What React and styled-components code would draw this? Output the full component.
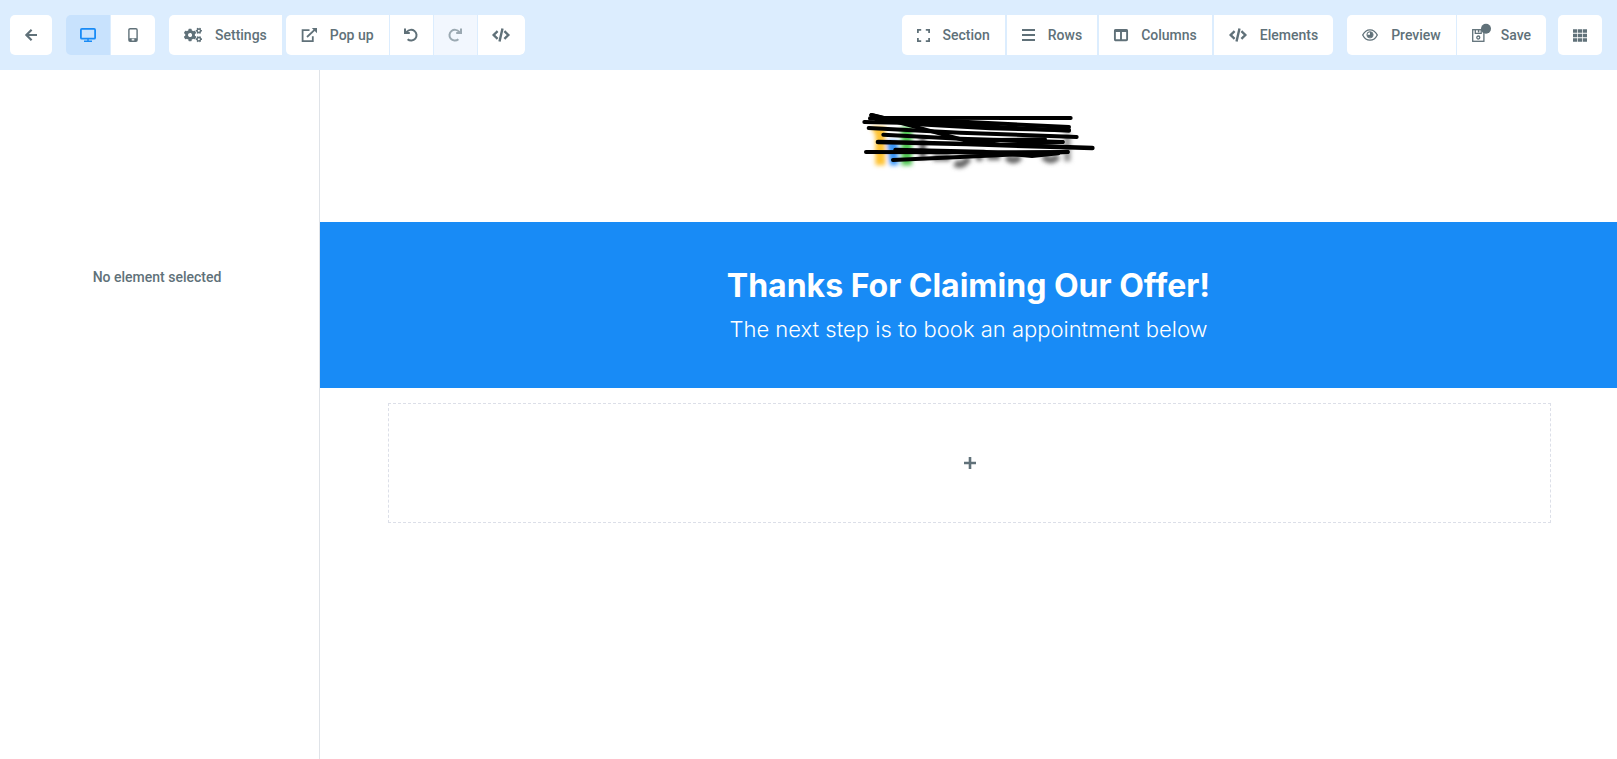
import React from "react";
import styled, { createGlobalStyle, css } from "styled-components";
import { FaCogs } from "react-icons/fa";

const GlobalStyle = createGlobalStyle`
  *, *::before, *::after { box-sizing: border-box; }
  html, body, #root { height: 100%; }
  body { margin: 0; background: #fff; color: #607179; font-family: Roboto, "Liberation Sans", sans-serif; }
`;

const Page = styled.div`
  display: flex;
  flex-direction: column;
  min-height: 100%;
`;

const Toolbar = styled.header`
  display: flex;
  justify-content: space-between;
  padding: 15px 15px 15px 10px;
  background: #dcedfe;
`;

const ToolbarSide = styled.div`
  display: flex;
  gap: ${(p) => p.$gap}px;
`;

const Group = styled.div`
  display: flex;
  gap: ${(p) => p.$gap || 1}px;
  border-radius: 5px;
  overflow: hidden;
`;

const ToolButton = styled.button`
  display: flex;
  align-items: center;
  justify-content: center;
  gap: 13px;
  height: 40px;
  min-width: ${(p) => p.$min || 44}px;
  padding: 0 ${(p) => (p.$iconOnly ? 0 : 15)}px;
  border: 0;
  background: #fff;
  color: #607179;
  font: 500 14px/20px Roboto, "Liberation Sans", sans-serif;
  white-space: nowrap;
  cursor: pointer;

  ${(p) =>
    p.$active &&
    css`
      background: #c8e2fd;
      color: #188bf6;
    `}

  &:disabled {
    background: #f2f7fe;
    color: #9ba9b2;
    cursor: default;
  }

  svg { flex: none; overflow: visible; }
`;

const Workspace = styled.div`
  display: flex;
  flex: 1;
`;

const Sidebar = styled.aside`
  flex: none;
  width: 320px;
  padding: 197px 5px 0 0;
  border-right: 1px solid #dfe3e8;
  font-size: 14px;
  font-weight: 500;
  line-height: 20px;
  text-align: center;
`;

const EmptyNote = styled.p`
  margin: 0;
`;

const Canvas = styled.main`
  flex: 1;
  min-width: 0;
`;

const LogoSection = styled.section`
  display: flex;
  justify-content: center;
  padding: 30px 0 42px;
`;

const Hero = styled.section`
  padding: 40px 16px;
  background: #188bf6;
  color: #fff;
  text-align: center;
`;

const HeroTitle = styled.h1`
  margin: 0;
  font: 700 32px/48px Inter, "Open Sans", sans-serif;
`;

const HeroText = styled.p`
  margin: 0;
  font: 300 22px/38px Inter, "Open Sans", sans-serif;
`;

const DropArea = styled.section`
  padding: 15px 66px 15px 68px;
`;

const AddButton = styled.button`
  display: flex;
  align-items: center;
  justify-content: center;
  width: 100%;
  height: 120px;
  border: 1px dashed #dcdfe8;
  background: transparent;
  color: #607179;
  cursor: pointer;
`;

function Icon({ w = 16, h = 16, stroke = 2, children }) {
  return (
    <svg width={w} height={h} viewBox={`0 0 ${w} ${h}`} fill="none" stroke="currentColor" strokeWidth={stroke} aria-hidden="true">
      {children}
    </svg>
  );
}

const BackIcon = () => (
  <Icon w={12} h={12} stroke={2.2}>
    <path d="M12 6H1.5M6.6.8L1.4 6l5.2 5.2" />
  </Icon>
);

const DesktopIcon = () => (
  <Icon w={16} h={14} stroke={1.8}>
    <rect x=".9" y=".9" width="14.2" height="9.8" rx="1" />
    <path d="M8 10.7v2.4M4 13.3h8" strokeWidth="1.5" />
  </Icon>
);

const PhoneIcon = () => (
  <Icon w={10} h={14} stroke={1.4}>
    <rect x=".9" y=".7" width="8.2" height="12.6" rx="1.2" />
    <path d="M1 11.8h2.7M6.3 11.8H9" strokeWidth="2.6" />
    <path d="M1.4 10.7h7.2" strokeWidth=".8" />
  </Icon>
);

const PopupIcon = () => (
  <Icon w={16} h={14} stroke={1.8}>
    <path d="M8.5 2.2H1.6v10.9h10.2V8.3" />
    <path d="M6 9l7.6-7.2" />
    <path d="M10.8 0H16v5.2z" fill="currentColor" stroke="none" />
  </Icon>
);

const UndoIcon = () => (
  <Icon w={14} h={14}>
    <path d="M2.800 4A5.400 5.400 0 1 1 3.600 11.300" />
    <path d="M1 .6v4.400h4.800" />
    <path d="M1 1.500L4.800 5.200H1z" fill="currentColor" stroke="none" />
  </Icon>
);

const RedoIcon = () => (
  <Icon w={14} h={14}>
    <path d="M11.200 4A5.400 5.400 0 1 0 10.400 11.300" />
    <path d="M13 .6v4.400H8.200" />
    <path d="M13 1.500L9.200 5.200H13z" fill="currentColor" stroke="none" />
  </Icon>
);

const CodeIcon = () => (
  <Icon w={18} h={14} stroke={2.4}>
    <path d="M5.600 3.200L1.700 7l3.900 3.800M12.400 3.200L16.300 7l-3.900 3.800M10.500.4L7.500 13.600" />
  </Icon>
);

const SectionIcon = () => (
  <Icon w={13} h={13} stroke={1.8}>
    <path d="M.9 4V.9H4.200M8.800.9h3.300V4M12.100 9v3.100H8.800M4.200 12.100H.9V9" />
  </Icon>
);

const RowsIcon = () => (
  <Icon w={13} h={12} stroke={2}>
    <path d="M0 1h13M0 6h13M0 11h13" />
  </Icon>
);

const ColumnsIcon = () => (
  <Icon w={14} h={12} stroke={1.900}>
    <rect x=".9" y=".9" width="12.200" height="10.400" rx=".8" />
    <path d="M7 2v9" />
    <path d="M.6 1.800h12.800" strokeWidth="2.600" />
  </Icon>
);

const EyeIcon = () => (
  <Icon w={16} h={12} stroke={1.300}>
    <path d="M.7 6C2.400 2.600 5 .8 8 .8S13.600 2.600 15.300 6C13.600 9.400 11 11.200 8 11.200S2.400 9.400.7 6z" />
    <circle cx="8" cy="5.800" r="3" fill="currentColor" stroke="none" />
    <path d="M5.400 5.800A2.600 2.600 0 0 1 8 3.200v2.600z" fill="#fff" stroke="none" />
    <circle cx="8" cy="5.800" r="3.200" strokeWidth=".8" />
  </Icon>
);

const SaveIcon = () => (
  <Icon w={16} h={13} stroke={1.300}>
    <rect x=".7" y=".7" width="11.200" height="11.600" />
    <path d="M3.300 1v3.400h5.900V1" />
    <path d="M6.600 1v2.400" strokeWidth="1.500" />
    <circle cx="6.300" cy="8.500" r="1.500" />
    <circle cx="14" cy="-.3" r="5" fill="currentColor" stroke="none" />
  </Icon>
);

const GridIcon = () => (
  <Icon w={14} h={13} stroke={3.600}>
    <path d="M0 2h14M0 6.500h14M0 11h14" strokeDasharray="4.200 .7" />
  </Icon>
);

const PlusIcon = () => (
  <Icon w={12} h={12} stroke={2.600}>
    <path d="M0 6h12M6 0v12" />
  </Icon>
);

function Logo() {
  return (
    <svg width="259" height="80" viewBox="-33 0 777 240" role="img" aria-label="Logo, crossed out">
      <defs>
        <filter id="smudge" x="-30%" y="-30%" width="160%" height="160%">
          <feGaussianBlur stdDeviation="7" />
        </filter>
      </defs>
      <g filter="url(#smudge)">
        <path d="M62 80h44v116H76v-90z" fill="#ffc233" />
        <path d="M110 122h34v74h-24z" fill="#3794f6" />
        <path d="M154 80h32v116h-32z" fill="#4fc653" />
        <g fill="none" stroke="#666" strokeWidth="20">
          <path d="M218 110v66M250 172h50M314 190q24 12 42-16M378 172h20M412 170h38M470 170q20 20 40 0M580 168q22 24 44 0" />
          <path d="M652 100v84" stroke="#999" />
        </g>
      </g>
      <g fill="none" stroke="#000" strokeWidth="12" strokeLinecap="round" strokeLinejoin="round">
        <path d="M64 45L100 53 662 54" />
        <path d="M60 55L190 58 657 81" />
        <path d="M43 66L220 70 657 92" />
        <path d="M64 45L180 76 345 121 585 118" />
        <path d="M56 84L330 98 680 111" />
        <path d="M100 104L330 116 638 126" />
        <path d="M84 126L350 132 727 144" strokeWidth="14" />
        <path d="M48 156L300 157 653 156" />
        <path d="M136 149L400 155 546 168 625 160" />
        <path d="M129 180L330 171 653 156" />
        <path d="M190 72L420 85 657 90M345 121L450 134 638 126M210 152L430 160 600 158" />
        <path d="M80 56L270 68 440 78" strokeWidth="16" />
      </g>
    </svg>
  );
}

export default function App() {
  return (
    <>
      <GlobalStyle />
      <Page>
        <Toolbar>
          <ToolbarSide $gap={14}>
            <Group>
              <ToolButton $iconOnly $min={42} aria-label="Back"><BackIcon /></ToolButton>
            </Group>
            <Group>
              <ToolButton $iconOnly $active aria-label="Desktop view" aria-pressed="true"><DesktopIcon /></ToolButton>
              <ToolButton $iconOnly aria-label="Mobile view"><PhoneIcon /></ToolButton>
            </Group>
            <Group $gap={4}>
              <ToolButton><FaCogs size={18} />Settings</ToolButton>
              <Group>
                <ToolButton><PopupIcon />Pop up</ToolButton>
                <ToolButton $iconOnly $min={43} aria-label="Undo"><UndoIcon /></ToolButton>
                <ToolButton $iconOnly $min={43} disabled aria-label="Redo"><RedoIcon /></ToolButton>
                <ToolButton $iconOnly $min={47} aria-label="Code"><CodeIcon /></ToolButton>
              </Group>
            </Group>
          </ToolbarSide>
          <ToolbarSide $gap={14}>
            <Group $gap={2}>
              <ToolButton><SectionIcon />Section</ToolButton>
              <ToolButton><RowsIcon />Rows</ToolButton>
              <ToolButton><ColumnsIcon />Columns</ToolButton>
              <ToolButton><CodeIcon />Elements</ToolButton>
            </Group>
            <ToolbarSide $gap={12}>
              <Group>
                <ToolButton><EyeIcon />Preview</ToolButton>
                <ToolButton><SaveIcon />Save</ToolButton>
              </Group>
              <Group>
                <ToolButton $iconOnly aria-label="Apps"><GridIcon /></ToolButton>
              </Group>
            </ToolbarSide>
          </ToolbarSide>
        </Toolbar>
        <Workspace>
          <Sidebar>
            <EmptyNote>No element selected</EmptyNote>
          </Sidebar>
          <Canvas>
            <LogoSection><Logo /></LogoSection>
            <Hero>
              <HeroTitle>Thanks For Claiming Our Offer!</HeroTitle>
              <HeroText>The next step is to book an appointment below</HeroText>
            </Hero>
            <DropArea>
              <AddButton aria-label="Add element"><PlusIcon /></AddButton>
            </DropArea>
          </Canvas>
        </Workspace>
      </Page>
    </>
  );
}
